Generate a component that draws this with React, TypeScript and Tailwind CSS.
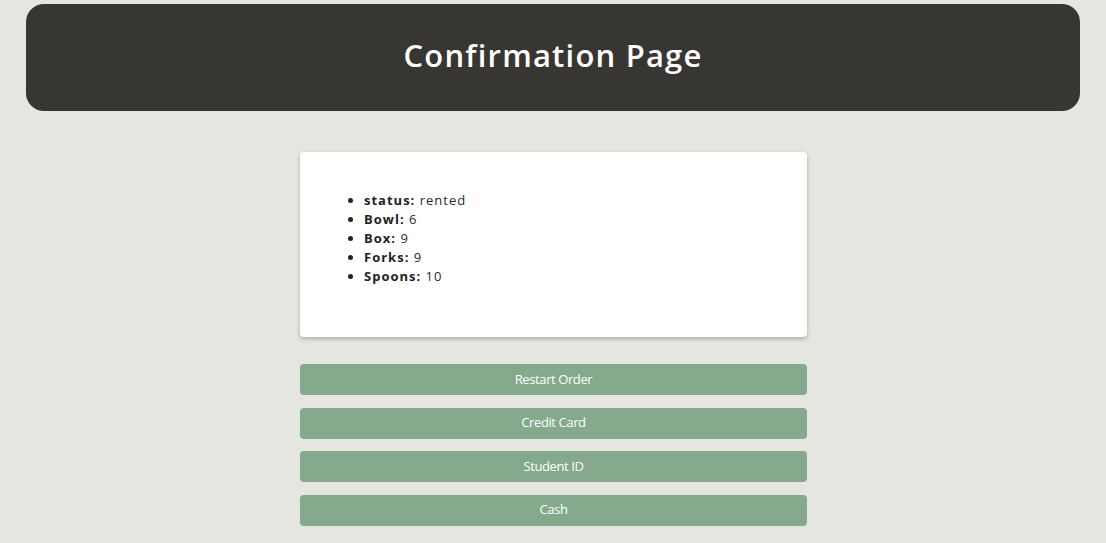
import React from 'react'

const items: [string, string][] = [
  ['status', 'rented'],
  ['Bowl', '6'],
  ['Box', '9'],
  ['Forks', '9'],
  ['Spoons', '10'],
]

const actions = ['Restart Order', 'Credit Card', 'Student ID', 'Cash']

export default function App() {
  return (
    <div className="min-h-[543px] bg-[#e6e6e0] pt-[4px] font-['Open_Sans',sans-serif]">
      <header className="mx-[26px] flex h-[107px] items-center justify-center rounded-[18px] bg-[#383632] pb-[4px]">
        <h1 className="text-[31px] font-semibold tracking-[1.2px] text-white">Confirmation Page</h1>
      </header>

      <main className="mx-auto mt-[41px] w-[508px] pl-px">
        <div className="h-[185px] w-[507px] rounded-[4px] bg-white px-[24px] pt-[39px] shadow-[0_2px_4px_rgba(0,0,0,0.25)]">
          <ul className="list-disc pl-[40px] text-[13px] leading-[19px] tracking-[1px] text-[#222]">
            {items.map(([k, v]) => (
              <li key={k}>
                <span className="font-bold">{k}:</span> <span className="font-normal text-[#2a2a2a]">{v}</span>
              </li>
            ))}
          </ul>
        </div>

        <div className="mt-[27px] flex flex-col gap-[12.5px]">
          {actions.map((a) => (
            <button
              key={a}
              className="h-[31px] w-full rounded-[4px] bg-[#84a98c] text-[13px] tracking-[-0.4px] text-white"
            >
              {a}
            </button>
          ))}
        </div>
      </main>
    </div>
  )
}
